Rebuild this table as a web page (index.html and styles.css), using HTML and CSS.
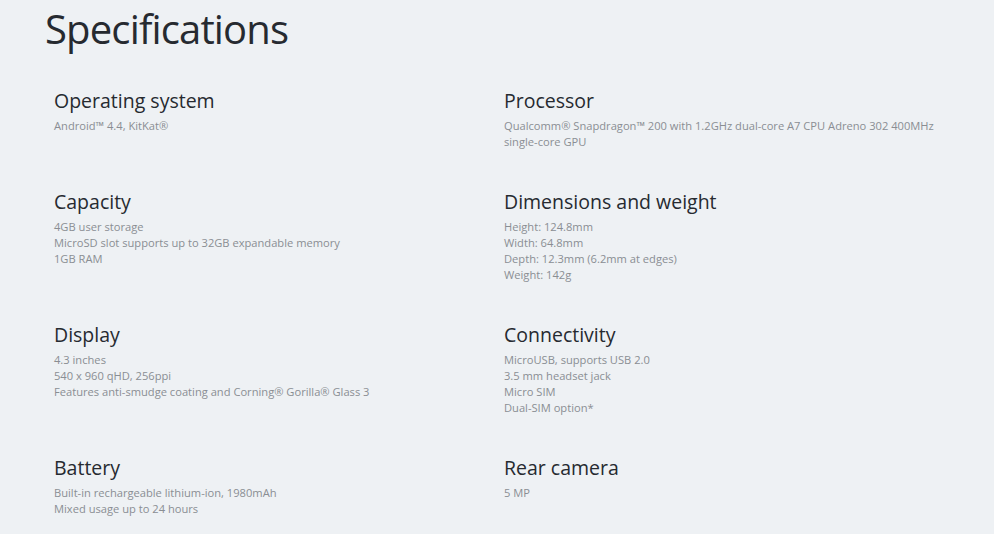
FILE: index.html
```html
<!DOCTYPE html>
<html lang="en">
<head>
<meta charset="utf-8">
<title>Specifications</title>
<link rel="stylesheet" href="styles.css">
</head>
<body>
<main class="specs">
  <h1 class="specs-title">Specifications</h1>
  <div class="specs-grid">
    <section class="spec">
      <h2 class="spec-name">Operating system</h2>
      <p class="spec-text">Android™ 4.4, KitKat®</p>
    </section>
    <section class="spec">
      <h2 class="spec-name">Processor</h2>
      <p class="spec-text">Qualcomm® Snapdragon™ 200 with 1.2GHz dual-core A7 CPU Adreno 302 400MHz single-core GPU</p>
    </section>
    <section class="spec">
      <h2 class="spec-name">Capacity</h2>
      <p class="spec-text">4GB user storage<br>MicroSD slot supports up to 32GB expandable memory<br>1GB RAM</p>
    </section>
    <section class="spec">
      <h2 class="spec-name">Dimensions and weight</h2>
      <p class="spec-text">Height: 124.8mm<br>Width: 64.8mm<br>Depth: 12.3mm (6.2mm at edges)<br>Weight: 142g</p>
    </section>
    <section class="spec">
      <h2 class="spec-name">Display</h2>
      <p class="spec-text">4.3 inches<br>540 x 960 qHD, 256ppi<br>Features anti-smudge coating and Corning® Gorilla® Glass 3</p>
    </section>
    <section class="spec">
      <h2 class="spec-name">Connectivity</h2>
      <p class="spec-text">MicroUSB, supports USB 2.0<br>3.5 mm headset jack<br>Micro SIM<br>Dual-SIM option*</p>
    </section>
    <section class="spec">
      <h2 class="spec-name">Battery</h2>
      <p class="spec-text">Built-in rechargeable lithium-ion, 1980mAh<br>Mixed usage up to 24 hours</p>
    </section>
    <section class="spec">
      <h2 class="spec-name">Rear camera</h2>
      <p class="spec-text">5 MP</p>
    </section>
  </div>
</main>
</body>
</html>
```
FILE: styles.css
```css
html, body {
  margin: 0;
  padding: 0;
  background: #eef1f4;
}
body {
  font-family: "Open Sans", "Noto Sans", sans-serif;
  color: #262a30;
}
.specs {
  padding: 4px 0 0 45px;
}
.specs-title {
  margin: 0;
  font-size: 40px;
  font-weight: 400;
  line-height: 50px;
  letter-spacing: -0.85px;
}
.specs-grid {
  display: grid;
  grid-template-columns: 450px 450px;
  padding: 33px 0 0 9px;
}
.spec {
  padding-bottom: 38px;
}
.spec-name {
  margin: 0 0 3px;
  font-size: 19.5px;
  font-weight: 400;
  line-height: 28px;
}
.spec-text {
  margin: 0;
  font-size: 11.15px;
  line-height: 16px;
  color: #8a8e93;
}
```
